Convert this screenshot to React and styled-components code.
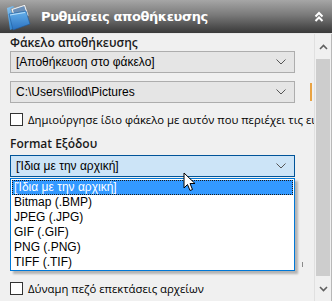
import React from "react";
import styled, { createGlobalStyle } from "styled-components";

const Global = createGlobalStyle`
  html, body {
    margin: 0;
    padding: 0;
    background: #f0f0f0;
  }
  * { box-sizing: border-box; }
`;

const Panel = styled.div`
  width: 332px;
  height: 301px;
  overflow: hidden;
  display: flex;
  flex-direction: column;
  background: #f0f0f0;
  font-family: "Liberation Sans", Arial, sans-serif;
`;

const Header = styled.div`
  height: 34px;
  flex: none;
  display: flex;
  align-items: center;
  padding: 0 8px 0 4px;
  background: linear-gradient(#a6a6a6 0%, #7a7a7a 45%, #4a4a4a 85%, #3a3a3a 100%);
  border-bottom: 1px solid #e8e8e8;
`;

const Title = styled.div`
  flex: 1;
  margin-left: 7px;
  color: #ffffff;
  font-family: "DejaVu Sans", Verdana, sans-serif;
  font-weight: bold;
  font-size: 13px;
  letter-spacing: -0.4px;
`;

const Body = styled.div`
  flex: 1;
  display: flex;
  min-height: 0;
`;

const Content = styled.div`
  position: relative;
  flex: 1;
  padding: 1px 0 0 10px;
  overflow: hidden;
`;

const Label = styled.div`
  font-family: "Open Sans", sans-serif;
  font-weight: 600;
  font-size: 12px;
  line-height: 15px;
  color: #1a1a1a;
  margin-top: ${(p) => p.$top || 0}px;
`;

const Combo = styled.div`
  width: 285px;
  height: 22px;
  margin-top: ${(p) => p.$top || 0}px;
  display: flex;
  align-items: center;
  padding: 0 8px 0 5px;
  border: 1px solid ${(p) => (p.$focus ? "#005499" : "#adadad")};
  background: ${(p) => (p.$focus ? "#cce4f7" : "#e5e5e5")};
  font-size: 12px;
  color: #000;
`;

const ComboText = styled.span`
  flex: 1;
  white-space: nowrap;
`;

const Row = styled.div`
  display: flex;
  align-items: center;
  margin-top: ${(p) => p.$top || 0}px;
`;

const Box = styled.div`
  width: 13px;
  height: 13px;
  flex: none;
  border: 1px solid #333;
  background: #fff;
`;

const CheckText = styled.span`
  margin-left: 5px;
  font-family: "Open Sans", sans-serif;
  font-size: 11.3px;
  color: #000;
  white-space: nowrap;
`;

const Accent = styled.div`
  width: 2px;
  height: 18px;
  margin-left: 15px;
  background: #e9a343;
`;

const List = styled.div`
  position: absolute;
  left: 10px;
  top: 144px;
  width: 285px;
  height: 93px;
  padding: 1px;
  background: #fff;
  border: 1px solid #0078d7;
  box-shadow: 3px 3px 2px rgba(0, 0, 0, 0.25);
`;

const Item = styled.div`
  height: 15px;
  line-height: 15px;
  padding-left: 2px;
  font-size: 12px;
  white-space: nowrap;
  color: ${(p) => (p.$active ? "#fff" : "#000")};
  background: ${(p) => (p.$active ? "#3399ff" : "transparent")};
  outline: ${(p) => (p.$active ? "1px dotted #1a1a1a" : "none")};
  outline-offset: -1px;
`;

const Cursor = styled.svg`
  position: absolute;
  left: 183px;
  top: 138px;
`;

const Tick = styled.div`
  position: absolute;
  left: 302px;
  top: 228px;
  width: 1px;
  height: 5px;
  background: #8a8a8a;
`;

const ScrollBar = styled.div`
  width: 18px;
  flex: none;
  display: flex;
  flex-direction: column;
  background: #f0f0f0;
  border-left: 1px solid #e0e0e0;
  border-right: 1px solid #b8b8b8;
`;

const Arrow = styled.div`
  height: 25px;
  display: flex;
  align-items: center;
  justify-content: center;
`;

const Thumb = styled.div`
  flex: 1;
  margin: 0 1px;
  background: #cdcdcd;
`;

const Chevron = ({ up, color = "#606060" }) => (
  <svg width="9" height="6" viewBox="0 0 9 6">
    <path
      d={up ? "M1 5 L4.5 1.5 L8 5" : "M1 1 L4.5 4.5 L8 1"}
      fill="none"
      stroke={color}
      strokeWidth="1.6"
    />
  </svg>
);

const ComboArrow = () => (
  <svg width="10" height="6" viewBox="0 0 10 6">
    <path d="M0.5 0.5 L5 5 L9.5 0.5" fill="none" stroke="#555" strokeWidth="1" />
  </svg>
);

const FolderIcon = () => (
  <svg width="30" height="30" viewBox="0 0 30 30">
    <defs>
      <linearGradient id="fb" x1="0" y1="0" x2="1" y2="1">
        <stop offset="0" stopColor="#8ec8f2" />
        <stop offset="0.5" stopColor="#3d8fd6" />
        <stop offset="1" stopColor="#1c5fa8" />
      </linearGradient>
      <linearGradient id="ff" x1="0" y1="0" x2="0" y2="1">
        <stop offset="0" stopColor="#66b2ec" />
        <stop offset="1" stopColor="#2a70bf" />
      </linearGradient>
    </defs>
    <path d="M3 6 L9 4 L11 6 L20 4 L22 22 L6 28 Z" fill="url(#fb)" />
    <g transform="rotate(-18 17 12)">
      <rect x="9" y="4" width="15" height="12" fill="#f4f4f4" stroke="#7a7a7a" strokeWidth="0.6" />
      <rect x="10.5" y="5.5" width="12" height="8" fill="#6a8fb8" />
      <path d="M10.5 13.5 L15 9 L18 12 L20 10 L22.5 13.5 Z" fill="#c98b3c" />
    </g>
    <path d="M5 12 L22 9 L26 22 L9 28 Z" fill="url(#ff)" stroke="#1d5a9c" strokeWidth="0.6" />
    <path d="M6 13 L21 10.5" stroke="#b9e0fb" strokeWidth="1" />
  </svg>
);

const DoubleUp = () => (
  <svg width="10" height="12" viewBox="0 0 10 12">
    <path d="M1.5 5.5 L5 2 L8.5 5.5 M1.5 10 L5 6.5 L8.5 10" fill="none" stroke="#fff" strokeWidth="2" />
  </svg>
);

const formats = [
  "[Ίδια με την αρχική]",
  "Bitmap (.BMP)",
  "JPEG (.JPG)",
  "GIF (.GIF)",
  "PNG (.PNG)",
  "TIFF (.TIF)",
];

export default function App() {
  return (
    <>
      <Global />
      <Panel>
        <Header>
          <FolderIcon />
          <Title>Ρυθμίσεις αποθήκευσης</Title>
          <DoubleUp />
        </Header>
        <Body>
          <Content>
            <Label>Φάκελο αποθήκευσης</Label>
            <Combo $top={1}>
              <ComboText>[Αποθήκευση στο φάκελο]</ComboText>
              <ComboArrow />
            </Combo>
            <Row $top={8}>
              <Combo>
                <ComboText>C:\Users\filod\Pictures</ComboText>
                <ComboArrow />
              </Combo>
              <Accent />
            </Row>
            <Row $top={9}>
              <Box />
              <CheckText>Δημιούργησε ίδιο φάκελο με αυτόν που περιέχει τις εικόνες</CheckText>
            </Row>
            <Label $top={9}>Format Εξόδου</Label>
            <Combo $top={4} $focus>
              <ComboText>[Ίδια με την αρχική]</ComboText>
              <ComboArrow />
            </Combo>
            <Row $top={104}>
              <Box />
              <CheckText>Δύναμη πεζό επεκτάσεις αρχείων</CheckText>
            </Row>
            <List>
              {formats.map((f, i) => (
                <Item key={f} $active={i === 0}>{f}</Item>
              ))}
            </List>
            <Tick />
            <Cursor width="13" height="20" viewBox="0 0 13 20">
              <path
                d="M1 1 L1 16 L4.5 12.5 L7 18.5 L9.5 17.5 L7 11.5 L12 11.5 Z"
                fill="#fff"
                stroke="#000"
                strokeWidth="1"
                strokeLinejoin="round"
              />
            </Cursor>
          </Content>
          <ScrollBar>
            <Arrow><Chevron up /></Arrow>
            <Thumb />
            <Arrow><Chevron /></Arrow>
          </ScrollBar>
        </Body>
      </Panel>
    </>
  );
}
